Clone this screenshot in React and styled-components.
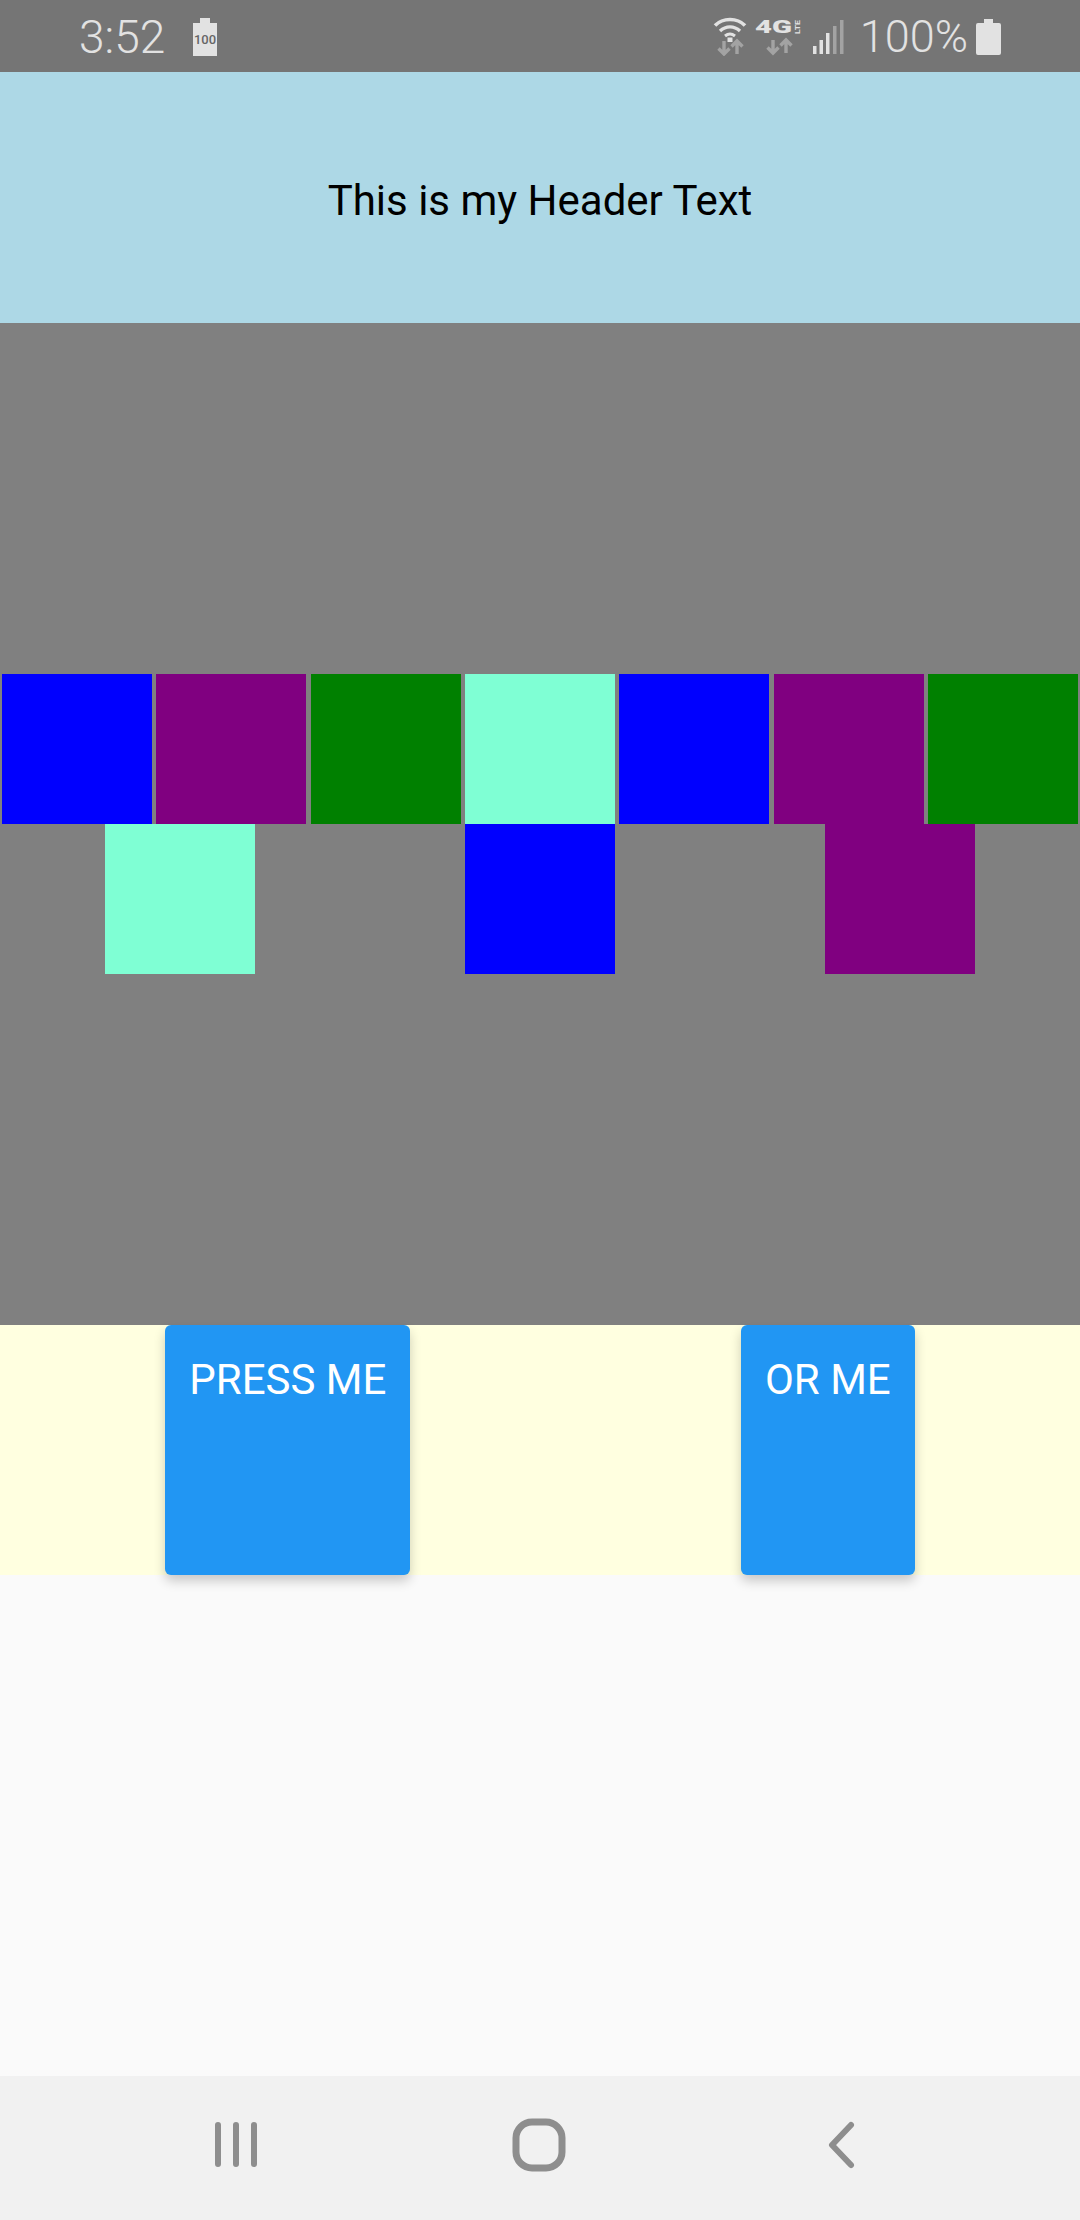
import React from "react";
import styled, { createGlobalStyle } from "styled-components";

const GlobalStyle = createGlobalStyle`
  html, body {
    margin: 0;
    padding: 0;
    background-color: #fafafa;
    font-family: Roboto, "Liberation Sans", sans-serif;
  }
`;

const Page = styled.div`
  width: 1080px;
  height: 2220px;
  display: flex;
  flex-direction: column;
  overflow: hidden;
`;

const StatusBar = styled.div`
  height: 72px;
  flex-shrink: 0;
  background-color: #757575;
  display: flex;
  justify-content: space-between;
  align-items: flex-start;
  padding: 0 79px 0 79px;
  color: #e2e2e2;
`;

const StatusGroup = styled.div`
  display: flex;
  align-items: flex-start;
`;

const StatusText = styled.span`
  font-size: ${(p) => p.$size}px;
  font-weight: 300;
  line-height: 72px;
  margin-top: 1px;
  margin-left: ${(p) => p.$left || 0}px;
  margin-right: ${(p) => p.$right || 0}px;
`;

const StatusIcon = styled.svg`
  display: block;
  margin-top: ${(p) => p.$top}px;
  margin-left: ${(p) => p.$left || 0}px;
`;

const Header = styled.div`
  height: 251px;
  flex-shrink: 0;
  box-sizing: border-box;
  padding-top: 5px;
  background-color: lightblue;
  display: flex;
  justify-content: center;
  align-items: center;
`;

const HeaderText = styled.span`
  font-size: 42px;
  color: #000;
`;

const Board = styled.div`
  height: 1002px;
  flex-shrink: 0;
  background-color: gray;
  display: flex;
  flex-wrap: wrap;
  justify-content: space-around;
  align-content: center;
`;

const Square = styled.div`
  width: 150px;
  height: 150px;
  background-color: ${(p) => p.$color};
`;

const ButtonRow = styled.div`
  height: 250px;
  flex-shrink: 0;
  background-color: lightyellow;
  display: flex;
  justify-content: space-around;
  align-items: stretch;
`;

const PressButton = styled.button`
  display: flex;
  align-items: flex-start;
  border: none;
  border-radius: 6px;
  background-color: #2196f3;
  color: #fff;
  font-family: Roboto, "Liberation Sans", sans-serif;
  font-size: 42px;
  line-height: 62px;
  padding: 24px;
  box-shadow: 0 6px 12px rgba(0, 0, 0, 0.2);
`;

const Spacer = styled.div`
  flex: 1;
`;

const NavBar = styled.div`
  height: 144px;
  flex-shrink: 0;
  box-sizing: border-box;
  background-color: #f1f1f1;
  display: flex;
  align-items: center;
  gap: 222px;
  padding-left: 196px;
  padding-bottom: 6px;
`;

const NavIcon = styled.svg`
  display: block;
  width: 80px;
  height: 80px;
  fill: none;
  stroke: #8e8e8e;
  stroke-linecap: round;
  stroke-linejoin: round;
`;

const colors = ["blue", "purple", "green", "aquamarine"];
const row = [0, 1, 2, 3, 0, 1, 2, 3, 0, 1];

const Arrows = ({ x = 0 }) => (
  <g transform={`translate(${x} 0)`} stroke="#a3a3a3" strokeWidth="3.4" fill="none">
    <path d="M8 25v13M2.5 32.5 8 38l5.5-5.5" />
    <path d="M21 38V25M15.5 30.5 21 25l5.5 5.5" />
  </g>
);

const App = () => {
  return (
    <Page>
      <GlobalStyle />
      <StatusBar>
        <StatusGroup>
          <StatusText $size={46}>3:52</StatusText>
          <StatusIcon $top={17} $left={27} width="26" height="39" viewBox="0 0 26 39">
            <path d="M1 6h7V1h10v5h7v33H1z" fill="#e2e2e2" />
            <text x="13" y="27" fontSize="13" fontWeight="500" textAnchor="middle" fill="#666" fontFamily="Roboto">100</text>
          </StatusIcon>
        </StatusGroup>
        <StatusGroup>
          <StatusIcon $top={16} width="34" height="40" viewBox="0 0 34 40" fill="none" stroke="#e2e2e2">
            <path d="M2 9.5C10 1.5 24 1.5 32 9.5" strokeWidth="3.6" />
            <path d="M7 15c6-5.5 14-5.5 20 0" strokeWidth="3.4" />
            <path d="M12 20c3-2.4 7-2.4 10 0" strokeWidth="3" />
            <rect x="14.5" y="21.5" width="5" height="4.5" fill="#e2e2e2" stroke="none" />
            <Arrows x={3} />
          </StatusIcon>
          <StatusIcon $top={15} $left={8} width="52" height="42" viewBox="0 0 52 42">
            <text x="0" y="18" fontSize="18" fontWeight="900" textLength="37" lengthAdjust="spacingAndGlyphs" fill="#e2e2e2" fontFamily="Roboto">4G</text>
            <text x="0" y="0" fontSize="7" fontWeight="700" textLength="14" lengthAdjust="spacingAndGlyphs" fill="#e2e2e2" fontFamily="Roboto" transform="translate(45 19) rotate(-90)">LTE</text>
            <g transform="translate(10 0)">
              <Arrows />
            </g>
          </StatusIcon>
          <StatusIcon $top={18} $left={5} width="34" height="38" viewBox="0 0 34 38" fill="#e2e2e2">
            <rect x="1" y="28" width="3.5" height="8" />
            <rect x="7.5" y="22" width="3.5" height="14" />
            <rect x="14" y="15" width="3.5" height="21" />
            <rect x="21" y="8" width="3.5" height="28" fill="#a3a3a3" />
            <rect x="28" y="2" width="3.5" height="34" fill="#a3a3a3" />
          </StatusIcon>
          <StatusText $size={45} $left={14} $right={8}>100%</StatusText>
          <StatusIcon $top={18} width="25" height="37" viewBox="0 0 25 37">
            <path d="M8 5V1h9v4h6a2 2 0 0 1 2 2v28a2 2 0 0 1-2 2H2a2 2 0 0 1-2-2V7a2 2 0 0 1 2-2z" fill="#e2e2e2" />
          </StatusIcon>
        </StatusGroup>
      </StatusBar>

      <Header>
        <HeaderText>This is my Header Text</HeaderText>
      </Header>

      <Board>
        {row.map((c, i) => (
          <Square key={i} $color={colors[c]} />
        ))}
      </Board>

      <ButtonRow>
        <PressButton>PRESS ME</PressButton>
        <PressButton>OR ME</PressButton>
      </ButtonRow>

      <Spacer />

      <NavBar>
        <NavIcon viewBox="0 0 80 80" strokeWidth="6">
          <path d="M22 20v39M40 20v39M58 20v39" />
        </NavIcon>
        <NavIcon viewBox="0 0 80 80" strokeWidth="7">
          <rect x="18" y="17" width="46" height="46" rx="16" />
        </NavIcon>
        <NavIcon viewBox="0 0 80 80" strokeWidth="6">
          <path d="M51 20 32 40l19 20" />
        </NavIcon>
      </NavBar>
    </Page>
  );
};

export default App;
